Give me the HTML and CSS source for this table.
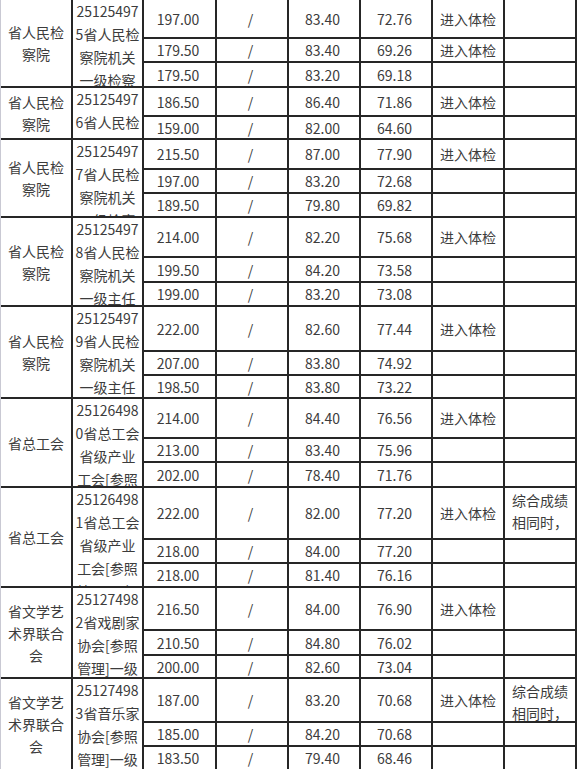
FILE: index.html
```html
<!DOCTYPE html>
<html lang="zh-CN">
<head>
<meta charset="utf-8">
<title>成绩表</title>
<link rel="stylesheet" href="styles.css">
</head>
<body>
<div class="sheet">
  <!-- group 1 -->
  <div class="cell dept g3">省人民检察院</div>
  <div class="cell code g3"><div>25125497<br>5省人民检<br>察院机关<br>一级检察</div></div>
  <div class="cell num">197.00</div><div class="cell num">/</div><div class="cell num">83.40</div><div class="cell num">72.76</div><div class="cell status">进入体检</div><div class="cell note"></div>
  <div class="cell num">179.50</div><div class="cell num">/</div><div class="cell num">83.40</div><div class="cell num">69.26</div><div class="cell status">进入体检</div><div class="cell note"></div>
  <div class="cell num">179.50</div><div class="cell num">/</div><div class="cell num">83.20</div><div class="cell num">69.18</div><div class="cell status"></div><div class="cell note"></div>
  <!-- group 2 -->
  <div class="cell dept g2">省人民检察院</div>
  <div class="cell code g2"><div>25125497<br>6省人民检<br>察院机关</div></div>
  <div class="cell num">186.50</div><div class="cell num">/</div><div class="cell num">86.40</div><div class="cell num">71.86</div><div class="cell status">进入体检</div><div class="cell note"></div>
  <div class="cell num">159.00</div><div class="cell num">/</div><div class="cell num">82.00</div><div class="cell num">64.60</div><div class="cell status"></div><div class="cell note"></div>
  <!-- group 3 -->
  <div class="cell dept g3">省人民检察院</div>
  <div class="cell code g3"><div>25125497<br>7省人民检<br>察院机关<br>一级检察</div></div>
  <div class="cell num">215.50</div><div class="cell num">/</div><div class="cell num">87.00</div><div class="cell num">77.90</div><div class="cell status">进入体检</div><div class="cell note"></div>
  <div class="cell num">197.00</div><div class="cell num">/</div><div class="cell num">83.20</div><div class="cell num">72.68</div><div class="cell status"></div><div class="cell note"></div>
  <div class="cell num">189.50</div><div class="cell num">/</div><div class="cell num">79.80</div><div class="cell num">69.82</div><div class="cell status"></div><div class="cell note"></div>
  <!-- group 4 -->
  <div class="cell dept g3">省人民检察院</div>
  <div class="cell code g3"><div>25125497<br>8省人民检<br>察院机关<br>一级主任</div></div>
  <div class="cell num">214.00</div><div class="cell num">/</div><div class="cell num">82.20</div><div class="cell num">75.68</div><div class="cell status">进入体检</div><div class="cell note"></div>
  <div class="cell num">199.50</div><div class="cell num">/</div><div class="cell num">84.20</div><div class="cell num">73.58</div><div class="cell status"></div><div class="cell note"></div>
  <div class="cell num">199.00</div><div class="cell num">/</div><div class="cell num">83.20</div><div class="cell num">73.08</div><div class="cell status"></div><div class="cell note"></div>
  <!-- group 5 -->
  <div class="cell dept g3">省人民检察院</div>
  <div class="cell code g3"><div>25125497<br>9省人民检<br>察院机关<br>一级主任</div></div>
  <div class="cell num">222.00</div><div class="cell num">/</div><div class="cell num">82.60</div><div class="cell num">77.44</div><div class="cell status">进入体检</div><div class="cell note"></div>
  <div class="cell num">207.00</div><div class="cell num">/</div><div class="cell num">83.80</div><div class="cell num">74.92</div><div class="cell status"></div><div class="cell note"></div>
  <div class="cell num">198.50</div><div class="cell num">/</div><div class="cell num">83.80</div><div class="cell num">73.22</div><div class="cell status"></div><div class="cell note"></div>
  <!-- group 6 -->
  <div class="cell dept g3">省总工会</div>
  <div class="cell code g3"><div>25126498<br>0省总工会<br>省级产业<br>工会[参照<br>管理]一级</div></div>
  <div class="cell num">214.00</div><div class="cell num">/</div><div class="cell num">84.40</div><div class="cell num">76.56</div><div class="cell status">进入体检</div><div class="cell note"></div>
  <div class="cell num">213.00</div><div class="cell num">/</div><div class="cell num">83.40</div><div class="cell num">75.96</div><div class="cell status"></div><div class="cell note"></div>
  <div class="cell num">202.00</div><div class="cell num">/</div><div class="cell num">78.40</div><div class="cell num">71.76</div><div class="cell status"></div><div class="cell note"></div>
  <!-- group 7 -->
  <div class="cell dept g3">省总工会</div>
  <div class="cell code g3"><div>25126498<br>1省总工会<br>省级产业<br>工会[参照<br>管理]一级</div></div>
  <div class="cell num">222.00</div><div class="cell num">/</div><div class="cell num">82.00</div><div class="cell num">77.20</div><div class="cell status">进入体检</div><div class="cell note"><div>综合成绩<br>相同时，</div></div>
  <div class="cell num">218.00</div><div class="cell num">/</div><div class="cell num">84.00</div><div class="cell num">77.20</div><div class="cell status"></div><div class="cell note"></div>
  <div class="cell num">218.00</div><div class="cell num">/</div><div class="cell num">81.40</div><div class="cell num">76.16</div><div class="cell status"></div><div class="cell note"></div>
  <!-- group 8 -->
  <div class="cell dept g3">省文学艺术界联合会</div>
  <div class="cell code g3"><div>25127498<br>2省戏剧家<br>协会[参照<br>管理]一级</div></div>
  <div class="cell num">216.50</div><div class="cell num">/</div><div class="cell num">84.00</div><div class="cell num">76.90</div><div class="cell status">进入体检</div><div class="cell note"></div>
  <div class="cell num">210.50</div><div class="cell num">/</div><div class="cell num">84.80</div><div class="cell num">76.02</div><div class="cell status"></div><div class="cell note"></div>
  <div class="cell num">200.00</div><div class="cell num">/</div><div class="cell num">82.60</div><div class="cell num">73.04</div><div class="cell status"></div><div class="cell note"></div>
  <!-- group 9 -->
  <div class="cell dept g3">省文学艺术界联合会</div>
  <div class="cell code g3"><div>25127498<br>3省音乐家<br>协会[参照<br>管理]一级</div></div>
  <div class="cell num">187.00</div><div class="cell num">/</div><div class="cell num">83.20</div><div class="cell num">70.68</div><div class="cell status">进入体检</div><div class="cell note"><div>综合成绩<br>相同时，</div></div>
  <div class="cell num">185.00</div><div class="cell num">/</div><div class="cell num">84.20</div><div class="cell num">70.68</div><div class="cell status"></div><div class="cell note"></div>
  <div class="cell num">183.50</div><div class="cell num">/</div><div class="cell num">79.40</div><div class="cell num">68.46</div><div class="cell status"></div><div class="cell note"></div>
</div>
</body>
</html>
```
FILE: styles.css
```css
html, body {
  margin: 0;
  padding: 0;
  background: #ffffff;
  overflow: hidden;
}

.sheet {
  display: grid;
  width: fit-content;
  grid-template-columns: 70px 69px 71px 70px 70px 70px 70px 70px;
  grid-template-rows:
    37px 22px 23px
    27px 21px
    28px 22px 22px
    38px 23px 22px
    43px 22px 21px
    38px 22px 23px
    50px 22px 22px
    41px 23px 21px
    42px 22px 22px;
  gap: 2px;
  background: #262626;
  border-left: 1px solid #c9c9d3;
  padding-right: 2px;
  font-family: "Noto Sans CJK SC", "Microsoft YaHei", sans-serif;
  font-size: 14px;
  color: #3c3c3c;
}

.cell {
  background: #ffffff;
  display: flex;
  align-items: center;
  justify-content: center;
  text-align: center;
  overflow: hidden;
  min-height: 0;
}

.g2 { grid-row: span 2; }
.g3 { grid-row: span 3; }

.dept {
  padding: 0 6px;
  line-height: 22px;
}

.code {
  align-items: flex-start;
  line-height: 23px;
  white-space: nowrap;
}

.num {
  padding-right: 3px;
  line-height: 20px;
}

.status {
  line-height: 20px;
}

.note {
  align-items: flex-start;
  padding-top: 1px;
  line-height: 22px;
  white-space: nowrap;
}
```
